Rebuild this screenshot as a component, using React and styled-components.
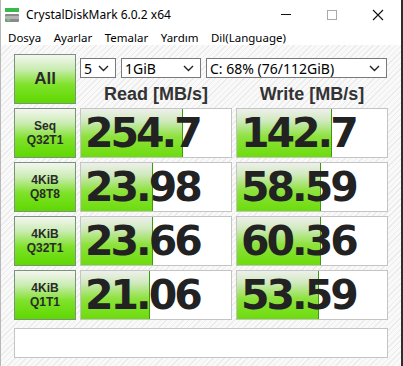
import React from 'react';
import styled, { createGlobalStyle } from 'styled-components';

const results = [
    { name: ['Seq', 'Q32T1'], read: '254.7', readFill: 67, write: '142.7', writeFill: 62.5 },
    { name: ['4KiB', 'Q8T8'], read: '23.98', readFill: 47.5, write: '58.59', writeFill: 55 },
    { name: ['4KiB', 'Q32T1'], read: '23.66', readFill: 47.5, write: '60.36', writeFill: 55 },
    { name: ['4KiB', 'Q1T1'], read: '21.06', readFill: 45.5, write: '53.59', writeFill: 54 },
];

const menu = ['Dosya', 'Ayarlar', 'Temalar', 'Yardım', 'Dil(Language)'];

const Chevron = () => (
    <svg width="11" height="7" viewBox="0 0 11 7">
        <polyline points="1,1 5.5,5.5 10,1" fill="none" stroke="#222" strokeWidth="1.4" />
    </svg>
);

const AppIcon = () => (
    <svg width="16" height="16" viewBox="0 0 16 16">
        <rect x="1" y="1" width="14" height="4" fill="#3cb84a" />
        <rect x="1" y="7" width="14" height="8" rx="1" fill="#8a8a8a" />
        <rect x="1" y="9" width="14" height="3" fill="#b4b4b4" />
        <rect x="3" y="12" width="3" height="2" fill="#5cd65c" />
    </svg>
);

const App = () => {
    return (
        <React.Fragment>
            <GlobalStyle />
            <Window>
                <TitleBar>
                    <AppIcon />
                    <Title>CrystalDiskMark 6.0.2 x64</Title>
                    <Controls>
                        <Control><MinLine /></Control>
                        <Control><MaxBox /></Control>
                        <Control>
                            <svg width="12" height="12" viewBox="0 0 12 12">
                                <path d="M1 1 L11 11 M11 1 L1 11" stroke="#111" strokeWidth="1.1" />
                            </svg>
                        </Control>
                    </Controls>
                </TitleBar>
                <MenuBar>
                    {menu.map((m) => <MenuItem key={m}>{m}</MenuItem>)}
                </MenuBar>
                <Content>
                    <AllButton>All</AllButton>
                    <TopArea>
                        <Selects>
                            <Select width={36}>5<Chevron /></Select>
                            <Select width={80}>1GiB<Chevron /></Select>
                            <Select width={181}>C: 68% (76/112GiB)<Chevron /></Select>
                        </Selects>
                        <Header>Read [MB/s]</Header>
                        <Header>Write [MB/s]</Header>
                    </TopArea>
                    {results.map((r) => (
                        <React.Fragment key={r.name.join('-')}>
                            <TestButton>
                                <span>{r.name[0]}</span>
                                <span>{r.name[1]}</span>
                            </TestButton>
                            <Result>
                                <Fill style={{ width: r.readFill + '%' }} />
                                <Value>{r.read}</Value>
                            </Result>
                            <Result>
                                <Fill style={{ width: r.writeFill + '%' }} />
                                <Value>{r.write}</Value>
                            </Result>
                        </React.Fragment>
                    ))}
                    <Comment />
                </Content>
            </Window>
        </React.Fragment>
    );
};

export default App;

const GlobalStyle = createGlobalStyle`
    body {
        margin: 0;
        background: #2e2e2e;
        overflow: hidden;
    }
`;

const Window = styled.div`
    width: 400px;
    height: 366px;
    background: #fff;
    border-left: 1px solid #b8b8b8;
    display: flex;
    flex-direction: column;
    font-family: "Noto Sans", "DejaVu Sans", sans-serif;
`;

const TitleBar = styled.div`
    flex-shrink: 0;
    height: 29px;
    display: flex;
    align-items: center;
    padding-left: 3px;
`;

const Title = styled.span`
    margin-left: 6px;
    font-size: 12px;
    color: #000;
`;

const Controls = styled.div`
    margin-left: auto;
    display: flex;
    height: 100%;
`;

const Control = styled.div`
    width: 46px;
    height: 100%;
    display: flex;
    align-items: center;
    justify-content: center;
`;

const MinLine = styled.div`
    width: 10px;
    height: 1px;
    background: #111;
`;

const MaxBox = styled.div`
    width: 8px;
    height: 8px;
    border: 1px solid #aaa;
`;

const MenuBar = styled.div`
    flex-shrink: 0;
    height: 16px;
    display: flex;
    align-items: center;
    gap: 12.5px;
    padding-left: 7px;
    font-size: 11.5px;
    color: #000;
`;

const MenuItem = styled.span``;

const Content = styled.div`
    flex: 1;
    min-height: 0;
    overflow: hidden;
    background-color: #f9f9f9;
    background-image: repeating-linear-gradient(
        135deg,
        #f9f9f9 0px,
        #f9f9f9 3px,
        #ebebeb 3px,
        #ebebeb 4px
    );
    padding: 9px 0 0 13px;
    display: grid;
    grid-template-columns: 62px 152px 152px;
    grid-template-rows: repeat(5, 50px) auto;
    column-gap: 4px;
    row-gap: 4px;
    align-content: start;
`;

const greenButton = `
    border: 1px solid #7a937a;
    background: linear-gradient(to bottom, #f4f6f2 0%, #c9ecb0 30%, #7fe22a 62%, #5ed800 100%);
    color: #2a2a2a;
    font-family: "Liberation Sans", Arial, sans-serif;
    font-weight: bold;
    display: flex;
    flex-direction: column;
    align-items: center;
    justify-content: center;
    box-sizing: border-box;
`;

const AllButton = styled.div`
    ${greenButton}
    font-size: 17px;
`;

const TestButton = styled.div`
    ${greenButton}
    font-size: 12px;
    line-height: 14px;
`;

const TopArea = styled.div`
    grid-column: 2 / 4;
    display: grid;
    grid-template-columns: 152px 152px;
    column-gap: 4px;
    align-content: start;
`;

const Selects = styled.div`
    grid-column: 1 / 3;
    display: flex;
    gap: 5px;
    margin-top: 4px;
`;

const Select = styled.div`
    width: ${(p) => p.width}px;
    height: 20px;
    box-sizing: border-box;
    border: 1px solid #7a7a7a;
    background: #fff;
    display: flex;
    align-items: center;
    justify-content: space-between;
    padding: 0 6px 0 3px;
    font-size: 14px;
    color: #000;
`;

const Header = styled.div`
    margin-top: 6px;
    text-align: center;
    font-family: "Liberation Sans", Arial, sans-serif;
    font-weight: bold;
    font-size: 18px;
    color: #333;
`;

const Result = styled.div`
    position: relative;
    border: 1px solid #c4c4c4;
    background: #fff;
    box-sizing: border-box;
    overflow: hidden;
    display: flex;
    align-items: center;
`;

const Fill = styled.div`
    position: absolute;
    left: 0;
    top: 0;
    bottom: 0;
    background: linear-gradient(to bottom, #eef0ec 0%, #cfe9bd 25%, #8de23c 58%, #6cdc0c 100%);
    border-right: 1px solid #3c9a10;
`;

const Value = styled.span`
    position: relative;
    padding-left: 4px;
    font-family: "DejaVu Sans", Verdana, sans-serif;
    font-weight: bold;
    font-size: 41px;
    letter-spacing: -3px;
    color: #222;
    line-height: 1;
`;

const Comment = styled.div`
    margin-top: 4px;
    grid-column: 1 / 4;
    height: 30px;
    border: 1px solid #c4c4c4;
    background: #fff;
    box-sizing: border-box;
`;
